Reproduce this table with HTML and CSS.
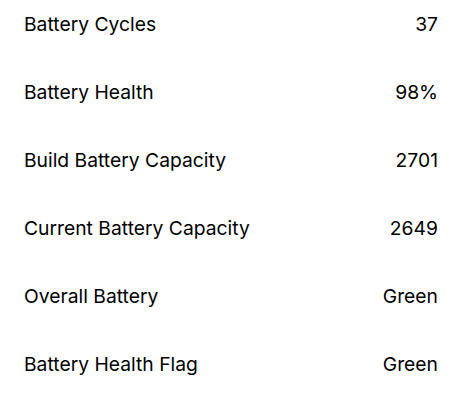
FILE: index.html
```html
<!DOCTYPE html>
<html>
<head>
<meta charset="utf-8">
<link rel="stylesheet" href="styles.css">
</head>
<body>
<div class="list">
  <div class="row"><span class="label">Battery Cycles</span><span class="value">37</span></div>
  <div class="row"><span class="label">Battery Health</span><span class="value">98%</span></div>
  <div class="row"><span class="label">Build Battery Capacity</span><span class="value">2701</span></div>
  <div class="row"><span class="label">Current Battery Capacity</span><span class="value">2649</span></div>
  <div class="row"><span class="label">Overall Battery</span><span class="value">Green</span></div>
  <div class="row"><span class="label">Battery Health Flag</span><span class="value">Green</span></div>
</div>
</body>
</html>
```
FILE: styles.css
```css
html, body {
  margin: 0;
  padding: 0;
  background: #ffffff;
}
body {
  font-family: Inter, "Noto Sans", sans-serif;
  color: #000000;
  font-size: 19.3px;
}
.list {
  display: flex;
  flex-direction: column;
  gap: 46px;
  padding: 13px 23px 0 24px;
}
.row {
  display: flex;
  justify-content: space-between;
  align-items: center;
  height: 22px;
  line-height: 22px;
}
```
